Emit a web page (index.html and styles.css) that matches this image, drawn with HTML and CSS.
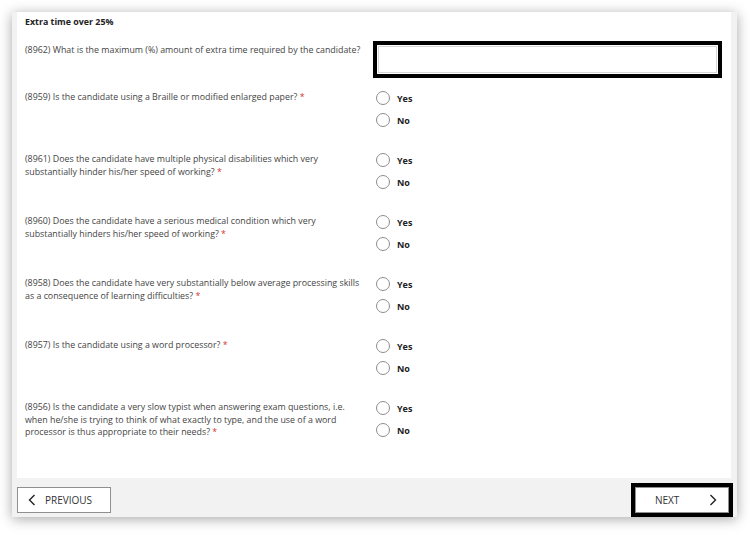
FILE: index.html
```html
<!DOCTYPE html>
<html lang="en">
<head>
    <meta charset="UTF-8">
    <meta name="viewport" content="width=device-width, initial-scale=1.0">
    <title>Extra time over 25%</title>
    <link rel="stylesheet" href="styles.css">
</head>
<body>
    <div class="card">
        <div class="content">
            <h3 class="section-title">Extra time over 25%</h3>

            <div class="row row-input">
                <div class="question">(8962) What is the maximum (%) amount of extra time required by the candidate?</div>
                <div class="answer">
                    <div class="input-focus"><input type="text" class="text-input"></div>
                </div>
            </div>

            <div class="row">
                <div class="question required">(8959) Is the candidate using a Braille or modified enlarged paper?</div>
                <div class="options">
                    <label class="option"><span class="radio"></span>Yes</label>
                    <label class="option"><span class="radio"></span>No</label>
                </div>
            </div>

            <div class="row">
                <div class="question required">(8961) Does the candidate have multiple physical disabilities which very substantially hinder his/her speed of working?</div>
                <div class="options">
                    <label class="option"><span class="radio"></span>Yes</label>
                    <label class="option"><span class="radio"></span>No</label>
                </div>
            </div>

            <div class="row">
                <div class="question required">(8960) Does the candidate have a serious medical condition which very substantially hinders his/her speed of working?</div>
                <div class="options">
                    <label class="option"><span class="radio"></span>Yes</label>
                    <label class="option"><span class="radio"></span>No</label>
                </div>
            </div>

            <div class="row">
                <div class="question required">(8958) Does the candidate have very substantially below average processing skills as a consequence of learning difficulties?</div>
                <div class="options">
                    <label class="option"><span class="radio"></span>Yes</label>
                    <label class="option"><span class="radio"></span>No</label>
                </div>
            </div>

            <div class="row">
                <div class="question required">(8957) Is the candidate using a word processor?</div>
                <div class="options">
                    <label class="option"><span class="radio"></span>Yes</label>
                    <label class="option"><span class="radio"></span>No</label>
                </div>
            </div>

            <div class="row">
                <div class="question required">(8956) Is the candidate a very slow typist when answering exam questions, i.e. when he/she is trying to think of what exactly to type, and the use of a word processor is thus appropriate to their needs?</div>
                <div class="options">
                    <label class="option"><span class="radio"></span>Yes</label>
                    <label class="option"><span class="radio"></span>No</label>
                </div>
            </div>
        </div>

        <div class="footer">
            <button class="nav-btn prev">
                <svg class="chevron" width="8" height="12" viewBox="0 0 8 12"><polyline points="6.5,1 1.5,6 6.5,11" fill="none" stroke="#222" stroke-width="1.4"/></svg>
                PREVIOUS
            </button>
            <div class="focus-ring">
                <button class="nav-btn next">
                    NEXT
                    <svg class="chevron" width="8" height="12" viewBox="0 0 8 12"><polyline points="1.5,1 6.5,6 1.5,11" fill="none" stroke="#222" stroke-width="1.4"/></svg>
                </button>
            </div>
        </div>
    </div>
</body>
</html>
```

FILE: styles.css
```css
body {
    font-family: 'Open Sans', 'Noto Sans', sans-serif;
    margin: 0;
    padding: 12px 13px 17px 12px;
    background: #ffffff;
    color: #444;
}

.card {
    background: #f2f2f2;
    box-shadow: 0 2px 12px rgba(0, 0, 0, 0.35);
    padding: 0 6px 0 5px;
    height: 505px;
    display: flex;
    flex-direction: column;
}

.content {
    background: #ffffff;
    flex: 1;
    padding: 4px 9px 0 8px;
}

.section-title {
    font-size: 8.85px;
    font-weight: 700;
    line-height: 12px;
    color: #222;
    margin: 0 0 13px 0;
}

.row {
    display: grid;
    grid-template-columns: 342px 1fr;
    column-gap: 6px;
    margin-bottom: 26px;
}

.row-input {
    margin-bottom: 13px;
}

.question {
    font-size: 8.85px;
    line-height: 12.5px;
    color: #444;
}

.row-input .question {
    padding-top: 3px;
}

.required::after {
    content: " *";
    color: #d9342b;
}

.input-focus {
    border: 4px solid #000;
    height: 37px;
    box-sizing: border-box;
    padding: 1px;
}

.text-input {
    display: block;
    width: 100%;
    height: 100%;
    box-sizing: border-box;
    border: 1px solid #d6d6d6;
    background: #fff;
    margin: 0;
    outline: none;
}

.options {
    display: flex;
    flex-direction: column;
    gap: 8px;
    padding-left: 3px;
}

.option {
    display: flex;
    align-items: center;
    gap: 7px;
    height: 14px;
    font-size: 9px;
    font-weight: 700;
    color: #222;
}

.radio {
    width: 14px;
    height: 14px;
    box-sizing: border-box;
    border: 1px solid #8c8c8c;
    border-radius: 50%;
    background: #fff;
}

.footer {
    height: 39px;
    display: flex;
    justify-content: space-between;
    align-items: flex-end;
}

.nav-btn {
    width: 94px;
    height: 26px;
    box-sizing: border-box;
    background: #fff;
    border: 1px solid #8f8f8f;
    font-family: 'Open Sans', 'Noto Sans', sans-serif;
    font-size: 10px;
    color: #333;
    display: flex;
    align-items: center;
    cursor: pointer;
    padding: 0 10px;
}

.prev {
    gap: 9px;
    margin-bottom: 4px;
}

.next {
    justify-content: space-between;
    padding: 0 11px 0 19px;
}

.focus-ring {
    border: 4px solid #000;
    margin-right: -2px;
}
```
